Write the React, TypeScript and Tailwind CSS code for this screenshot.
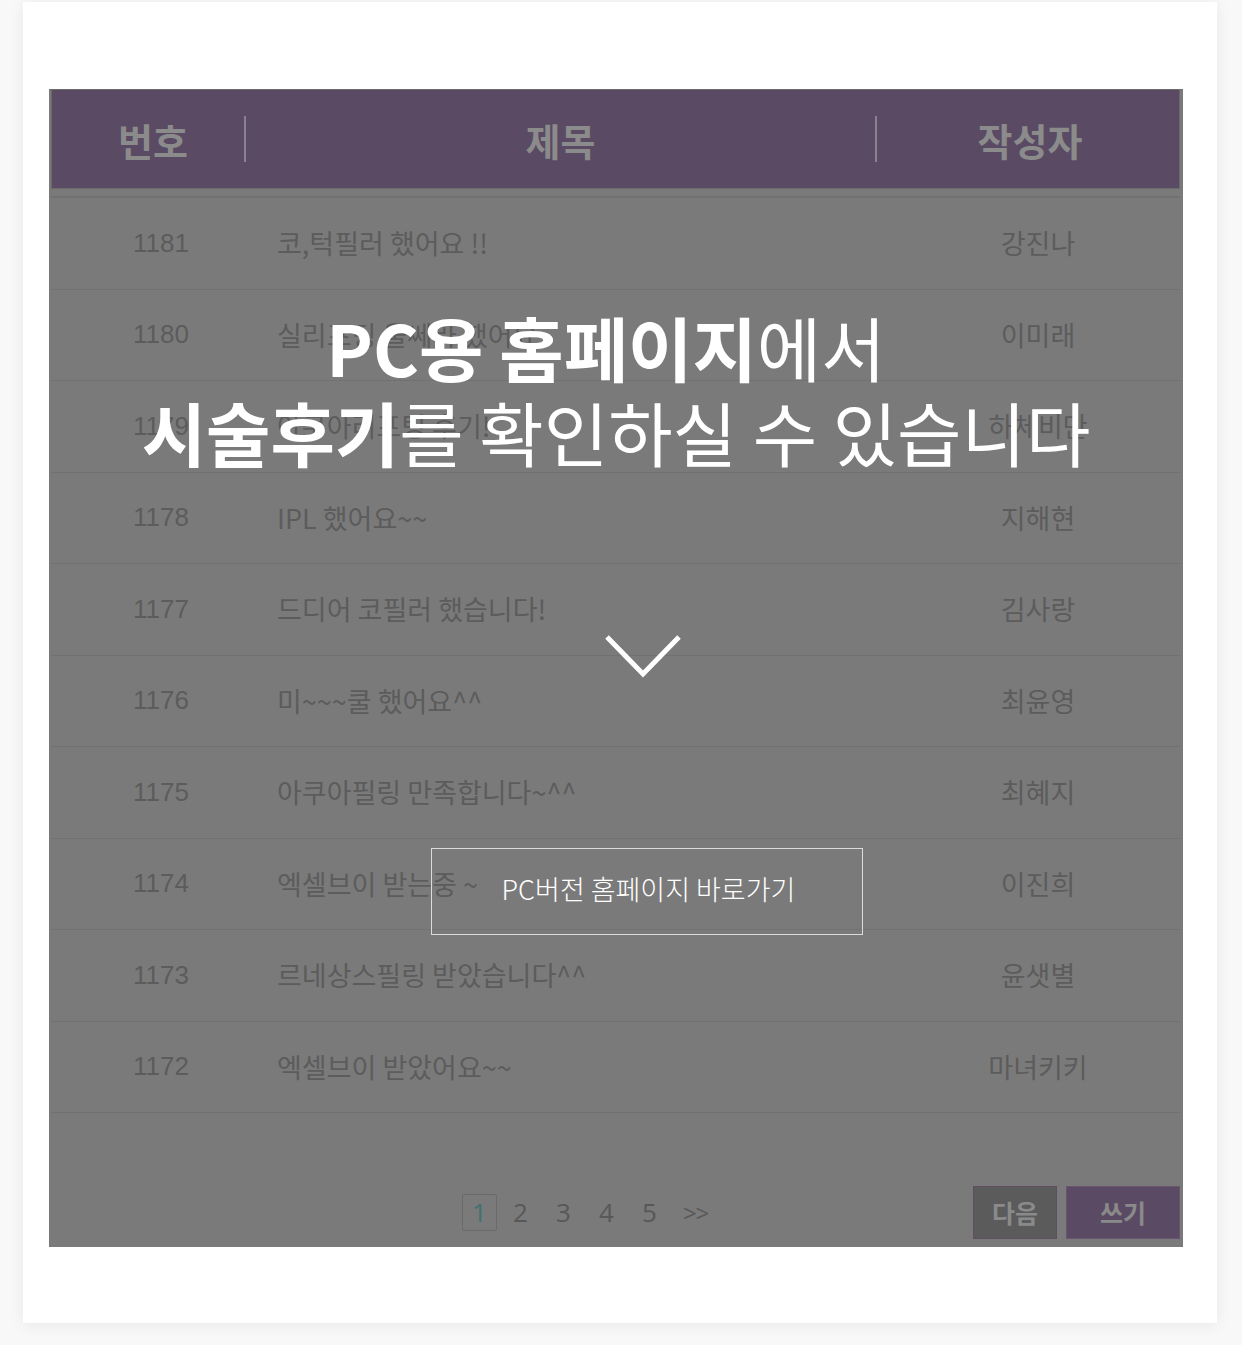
import React from "react";

const rows = [
  ["1181", "코,턱필러 했어요 !!", "강진나"],
  ["1180", "실리프팅 울쎄라 했어요~", "이미래"],
  ["1179", "아쿠아리프팅 후기!", "하체비만"],
  ["1178", "IPL 했어요~~", "지해현"],
  ["1177", "드디어 코필러 했습니다!", "김사랑"],
  ["1176", "미~~~쿨 했어요^^", "최윤영"],
  ["1175", "아쿠아필링 만족합니다~^^", "최혜지"],
  ["1174", "엑셀브이 받는중 ~", "이진희"],
  ["1173", "르네상스필링 받았습니다^^", "윤샛별"],
  ["1172", "엑셀브이 받았어요~~", "마녀키키"],
];

const kr = { fontFamily: '"Noto Sans CJK KR", "Noto Sans", sans-serif' };
const num = { fontFamily: '"Liberation Sans", Arial, sans-serif' };

export default function App() {
  return (
    <div className="min-h-[1345px] w-[1242px] bg-[#f8f8f8] pt-[2px]" style={kr}>
      <div className="ml-[23px] h-[1321px] w-[1194px] bg-white pl-[26px] pt-[87px] shadow-[0_2px_14px_rgba(0,0,0,0.07)]">
        <div className="relative h-[1158px] w-[1134px] bg-[#7a7a7a] pl-[2px] pr-[3px]">
          {/* header */}
          <div className="flex h-[100px] items-center border border-[#6a6a6a] bg-[#5a4a64] text-[38px] font-bold text-[#8b8b8b]">
            <div className="flex w-[192px] justify-center pl-[10px]">번호</div>
            <div className="h-[46px] w-[2px] bg-[#8a8290]" />
            <div className="flex w-[629px] justify-center">제목</div>
            <div className="h-[46px] w-[2px] bg-[#8a8290]" />
            <div className="flex flex-1 justify-center pl-[4px]">작성자</div>
          </div>
          <div className="mt-[7px] h-[2px] bg-[#717171]" />
          {rows.map((r) => (
            <div
              key={r[0]}
              className="flex h-[91.5px] items-center border-b border-[#717171] text-[27px] text-[#5c5c5c]"
            >
              <div className="w-[226px] pl-[82px] text-[26px]" style={num}>
                {r[0]}
              </div>
              <div className="flex-1">{r[1]}</div>
              <div className="flex w-[290px] justify-center pl-[6px]">{r[2]}</div>
            </div>
          ))}
          {/* pagination */}
          <div className="relative h-[134px]">
            <div
              className="absolute left-[411px] top-[80px] flex items-center text-[26px] text-[#585858]"
              style={{ fontFamily: '"Open Sans", "Noto Sans", sans-serif' }}
            >
              <div className="flex h-[37px] w-[35px] items-center justify-center rounded-[2px] border border-[#6a6a6a] text-[#3f7272]">
                1
              </div>
              <div className="ml-[2px] w-[43px] text-center">2</div>
              <div className="w-[43px] text-center">3</div>
              <div className="w-[43px] text-center">4</div>
              <div className="w-[43px] text-center">5</div>
              <div className="ml-[12px] text-[24px] tracking-[-0.05em]">&gt;&gt;</div>
            </div>
            <div className="absolute right-0 top-[73px] flex gap-[9px] text-[25px] font-bold text-[#8a8a8a]">
              <div className="flex h-[53px] w-[84px] items-center justify-center border border-[#5e4e60] bg-[#5b5b5b]">
                다음
              </div>
              <div className="flex h-[53px] w-[114px] items-center justify-center border border-[#6a5470] bg-[#5a4a64]">
                쓰기
              </div>
            </div>
          </div>

          {/* overlay message */}
          <div className="absolute left-0 right-0 top-[215px] flex flex-col items-center text-[70px] leading-[85px] text-white">
            <div className="pr-[20px]">
              <span className="font-bold">PC용 홈페이지</span>
              <span className="font-normal">에서</span>
            </div>
            <div>
              <span className="font-bold">시술후기</span>
              <span className="font-normal">를 확인하실 수 있습니다</span>
            </div>
          </div>
          <svg
            className="absolute left-[555px] top-[545px]"
            width="78"
            height="46"
            viewBox="0 0 78 46"
            fill="none"
          >
            <path d="M3 3 L39 40 L75 3" stroke="white" strokeWidth="5" />
          </svg>
          <div className="absolute left-[382px] top-[759px] flex h-[87px] w-[432px] items-center justify-center border border-[#dcdcdc] pb-[4px] pl-[3px] text-[27px] font-light text-white">
            PC버전 홈페이지 바로가기
          </div>
        </div>
      </div>
    </div>
  );
}
